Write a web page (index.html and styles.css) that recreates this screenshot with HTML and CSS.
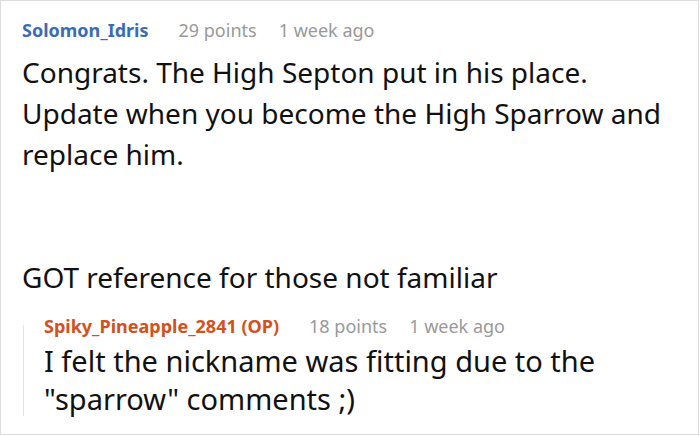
FILE: index.html
```html
<!DOCTYPE html>
<html>
<head>
<meta charset="utf-8">
<link rel="stylesheet" href="styles.css">
</head>
<body>
<div class="card">
  <div class="meta">
    <span class="user">Solomon_Idris</span>
    <span class="info">29 points</span>
    <span class="info">1 week ago</span>
  </div>
  <div class="text">Congrats. The High Septon put in his place.<br>Update when you become the High Sparrow and replace him.<br><br><br>GOT reference for those not familiar</div>
  <div class="reply">
    <div class="rail"></div>
    <div class="reply-body">
      <div class="meta">
        <span class="user op">Spiky_Pineapple_2841 (OP)</span>
        <span class="info">18 points</span>
        <span class="info">1 week ago</span>
      </div>
      <div class="text reply-text">I felt the nickname was fitting due to the "sparrow" comments ;)</div>
    </div>
  </div>
</div>
</body>
</html>
```
FILE: styles.css
```css
html, body {
  margin: 0;
  padding: 0;
  background: #fff;
}
.card {
  box-sizing: border-box;
  width: 699px;
  height: 435px;
  border: 1px solid #dcdcdc;
  padding: 16px 20px 0 21px;
  font-family: "Noto Sans", sans-serif;
  overflow: hidden;
}
.meta {
  display: flex;
  gap: 22px;
  font-size: 18px;
  line-height: 26px;
}
.user {
  font-weight: bold;
  color: #3a6cb5;
  margin-right: 8px;
}
.user.op {
  color: #d4501c;
}
.info {
  color: #999;
}
.text {
  font-size: 28px;
  line-height: 41px;
  color: #111;
  margin-top: 9px;
  width: 650px;
}
.reply {
  display: flex;
  margin-top: 15px;
  margin-left: 1px;
}
.rail {
  width: 1px;
  background: #e2e2e2;
  margin-top: 12px;
  margin-bottom: 2px;
  flex: none;
}
.reply-body {
  padding-left: 20px;
}
.reply-text {
  font-size: 29px;
  margin-top: 3px;
  line-height: 38px;
  width: 640px;
}
```
